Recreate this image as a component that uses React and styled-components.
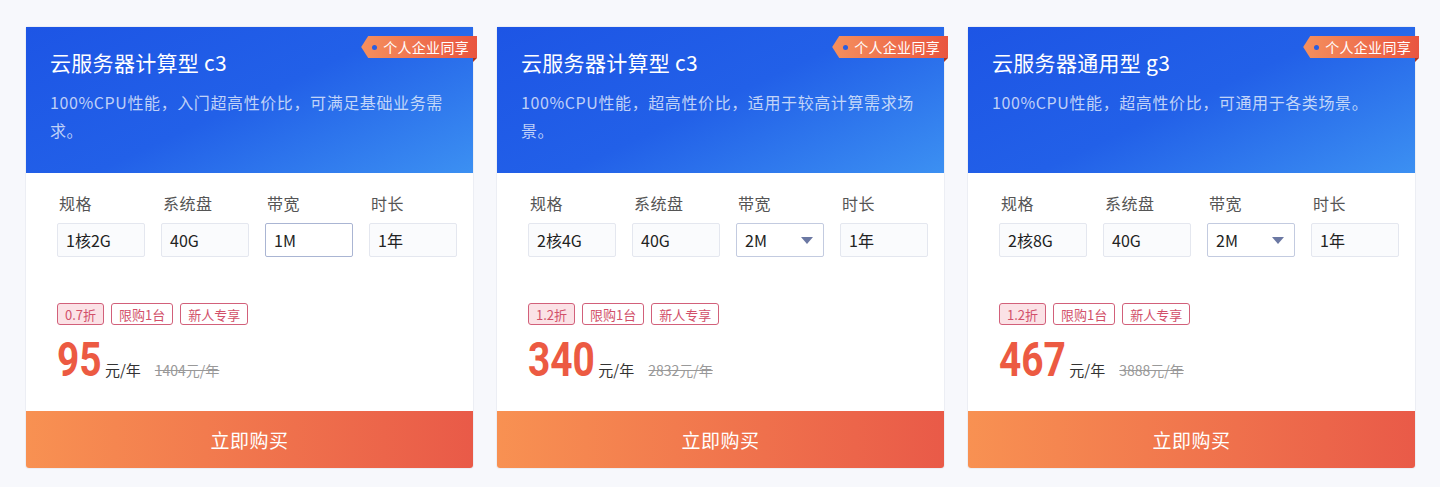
import React from 'react';
import styled, { createGlobalStyle } from 'styled-components';

const GlobalStyle = createGlobalStyle`
  html, body {
    margin: 0;
    padding: 0;
    background: #f7f8fc;
  }
  body {
    font-family: "Noto Sans CJK SC", "Noto Sans", sans-serif;
  }
`;

const products = [
  {
    title: '云服务器计算型 c3',
    desc: '100%CPU性能，入门超高性价比，可满足基础业务需求。',
    spec: '1核2G',
    disk: '40G',
    bandwidth: '1M',
    select: false,
    term: '1年',
    discount: '0.7折',
    price: '95',
    origin: '1404元/年',
  },
  {
    title: '云服务器计算型 c3',
    desc: '100%CPU性能，超高性价比，适用于较高计算需求场景。',
    spec: '2核4G',
    disk: '40G',
    bandwidth: '2M',
    select: true,
    term: '1年',
    discount: '1.2折',
    price: '340',
    origin: '2832元/年',
  },
  {
    title: '云服务器通用型 g3',
    desc: '100%CPU性能，超高性价比，可通用于各类场景。',
    spec: '2核8G',
    disk: '40G',
    bandwidth: '2M',
    select: true,
    term: '1年',
    discount: '1.2折',
    price: '467',
    origin: '3888元/年',
  },
];

const App = () => {
  return (
    <>
      <GlobalStyle />
      <Page>
        {products.map((p, i) => (
          <Card key={i}>
            <Header>
              <Title>{p.title}</Title>
              <Desc>{p.desc}</Desc>
              <BadgeWrap>
                <Badge>
                  <BadgeDot />
                  个人企业同享
                </Badge>
                <BadgeFold />
              </BadgeWrap>
            </Header>
            <Body>
              <SpecGrid>
                <Field>
                  <Label>规格</Label>
                  <Input>{p.spec}</Input>
                </Field>
                <Field>
                  <Label>系统盘</Label>
                  <Input>{p.disk}</Input>
                </Field>
                <Field>
                  <Label>带宽</Label>
                  <Input $active={!p.select} $select={p.select}>
                    {p.bandwidth}
                    {p.select && <Caret />}
                  </Input>
                </Field>
                <Field>
                  <Label>时长</Label>
                  <Input>{p.term}</Input>
                </Field>
              </SpecGrid>
              <Tags>
                <Tag $filled>{p.discount}</Tag>
                <Tag>限购1台</Tag>
                <Tag>新人专享</Tag>
              </Tags>
              <PriceRow>
                <Price $digits={p.price.length}>{p.price}</Price>
                <Unit>元/年</Unit>
                <Origin>{p.origin}</Origin>
              </PriceRow>
            </Body>
            <BuyButton>立即购买</BuyButton>
          </Card>
        ))}
      </Page>
    </>
  );
};

export default App;

// Styled-components
const Page = styled.div`
  display: grid;
  grid-template-columns: repeat(3, 447px);
  gap: 24px;
  padding: 27px 24px 20px 26px;
`;

const Card = styled.div`
  display: flex;
  flex-direction: column;
  background: #fff;
  border-radius: 3px;
  box-shadow: 0 0 0 1px #eceef4;
`;

const Header = styled.div`
  position: relative;
  height: 146px;
  box-sizing: border-box;
  padding: 20px 24px 0 24px;
  background: linear-gradient(155deg, #1d55e5 0%, #2260e8 50%, #3c90f2 100%);
  color: #fff;
`;

const Title = styled.div`
  font-size: 21px;
  line-height: 30px;
  letter-spacing: 0.3px;
`;

const Desc = styled.div`
  margin-top: 11px;
  font-size: 16px;
  line-height: 28px;
  letter-spacing: 0.6px;
  color: rgba(255, 255, 255, 0.72);
`;

const BadgeWrap = styled.div`
  position: absolute;
  top: 9px;
  right: -4px;
  display: flex;
  flex-direction: column;
  align-items: flex-end;
`;

const Badge = styled.div`
  height: 22px;
  display: flex;
  align-items: center;
  gap: 6px;
  padding: 0 8px 0 11px;
  font-size: 14px;
  letter-spacing: 0.3px;
  color: #fff;
  background: linear-gradient(90deg, #f5905e, #e9553f);
  clip-path: polygon(7px 0, 100% 0, 100% 100%, 7px 100%, 0 50%);
`;

const BadgeFold = styled.div`
  width: 0;
  height: 0;
  border-top: 4px solid #a8321f;
  border-right: 4px solid transparent;
`;

const BadgeDot = styled.span`
  width: 5px;
  height: 5px;
  border-radius: 50%;
  background: #2a5ee0;
`;

const Body = styled.div`
  height: 238px;
  box-sizing: border-box;
  padding: 18px 0 0 31px;
  display: flex;
  flex-direction: column;
`;

const SpecGrid = styled.div`
  display: grid;
  grid-template-columns: repeat(4, 1fr);
`;

const Field = styled.div`
  display: flex;
  flex-direction: column;
  gap: 8px;
`;

const Label = styled.div`
  font-size: 16px;
  line-height: 24px;
  padding-left: 2px;
  letter-spacing: 0.5px;
  color: #555;
`;

const Input = styled.div`
  width: 88px;
  height: 34px;
  box-sizing: border-box;
  display: flex;
  align-items: center;
  justify-content: space-between;
  padding: 0 10px 0 8px;
  font-size: 16px;
  color: #222;
  border-radius: 2px;
  border: 1px solid ${(p) => (p.$active ? '#aab5d3' : p.$select ? '#c3cbe0' : '#e4e7ef')};
  background: ${(p) => (p.$active || p.$select ? '#fff' : '#fafbfd')};
`;

const Caret = styled.span`
  width: 0;
  height: 0;
  border-left: 6px solid transparent;
  border-right: 6px solid transparent;
  border-top: 7px solid #6b78a3;
`;

const Tags = styled.div`
  display: flex;
  gap: 7px;
  margin-top: 46px;
`;

const Tag = styled.div`
  height: 22px;
  box-sizing: border-box;
  display: flex;
  align-items: center;
  padding: 0 7px;
  font-size: 13px;
  color: #d2506a;
  border: 1px solid #d2607a;
  border-radius: 3px;
  background: ${(p) => (p.$filled ? '#fbe2e6' : '#fff')};
`;

const PriceRow = styled.div`
  display: flex;
  align-items: baseline;
  margin-top: 9px;
`;

const Price = styled.span`
  display: inline-block;
  font-family: Roboto, "Liberation Sans", sans-serif;
  font-weight: 700;
  font-size: 48px;
  line-height: 52px;
  color: #ec5a42;
  transform: scaleX(0.81);
  transform-origin: left center;
  margin-right: ${(p) => -p.$digits * 5.1 + 3}px;
`;

const Unit = styled.span`
  font-size: 15px;
  color: #333;
`;

const Origin = styled.span`
  margin-left: 14px;
  font-size: 14px;
  color: #999;
  text-decoration: line-through;
`;

const BuyButton = styled.button`
  height: 57px;
  border: none;
  border-radius: 0 0 3px 3px;
  background: linear-gradient(90deg, #f89152, #e95a48);
  color: #fff;
  font-family: "Noto Sans CJK SC", sans-serif;
  font-size: 19px;
  letter-spacing: 0.5px;
  cursor: pointer;
`;
